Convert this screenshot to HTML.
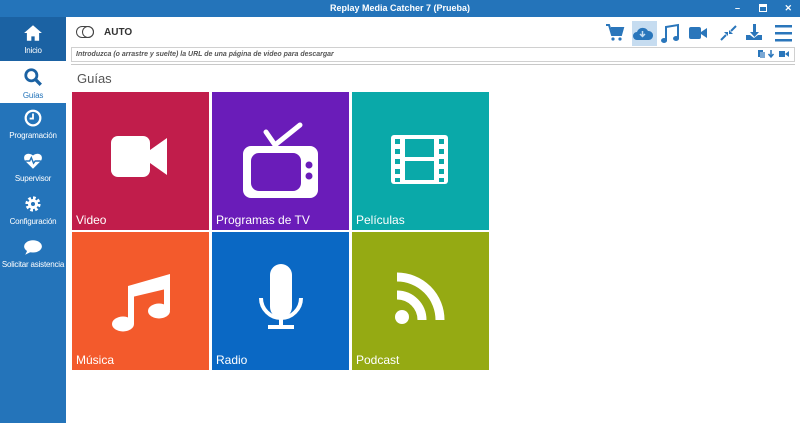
<!DOCTYPE html>
<html><head><meta charset="utf-8"><style>
*{margin:0;padding:0;box-sizing:border-box}
body{width:800px;height:423px;overflow:hidden;background:#fff;font-family:"Liberation Sans",sans-serif;position:relative}
.abs{position:absolute}
#title{left:0;top:0;width:800px;height:17px;background:#2474ba;color:#fff;font-size:9px;font-weight:bold;text-align:center;line-height:17px}
#side{left:0;top:17px;width:66px;height:406px;background:#2474ba}
.si{position:absolute;left:0;width:66px;text-align:center;color:#fff;font-size:8px;white-space:nowrap;letter-spacing:-0.2px}
.si svg{display:block;margin:0 auto 4px}
.tile{position:absolute;width:137px;height:138px;color:#fff;font-size:12px}
.tile span{position:absolute;left:4px;bottom:3px}
.tile svg{position:absolute;left:0;top:0}
</style></head><body>
<div id="title" class="abs">Replay Media Catcher 7 (Prueba)
<span style="position:absolute;right:60px;top:0">–</span>
<span style="position:absolute;right:33px;top:4px;width:8px;height:8px;border:1.5px solid #fff;border-top-width:3px"></span>
<span style="position:absolute;right:8px;top:0">✕</span></div>
<div id="side" class="abs">
 <div class="si" style="top:0;height:44px;background:#1b62a3;padding-top:7px">
  <svg width="20" height="18" viewBox="0 0 18 16"><path d="M9 1L1 8h2.5v7h4v-4h3v4h4V8H17z" fill="#fff"/></svg>Inicio</div>
 <div class="si" style="top:44px;height:42px;background:#fff;color:#2474ba;padding-top:6px">
  <svg width="20" height="20" viewBox="0 0 18 18"><circle cx="7.5" cy="7.5" r="5" fill="none" stroke="#1b62a3" stroke-width="2.5"/><path d="M11 11l5 5" stroke="#1b62a3" stroke-width="3"/></svg>Guías</div>
 <div class="si" style="top:92px">
  <svg width="18" height="18" viewBox="0 0 16 16"><circle cx="8" cy="8" r="6.5" fill="none" stroke="#fff" stroke-width="2"/><path d="M8 4v4.5H5" fill="none" stroke="#fff" stroke-width="1.6"/></svg>Programación</div>
 <div class="si" style="top:135px">
  <svg width="20" height="18" viewBox="0 0 18 16"><path d="M9 15L2 8C-1 4 3-1 9 3c6-4 10 1 7 5z" fill="#fff"/><path d="M2 8h4l1.5-3 2 5 1.5-2H16" fill="none" stroke="#2474ba" stroke-width="1.3"/></svg>Supervisor</div>
 <div class="si" style="top:178px">
  <svg width="18" height="18" viewBox="0 0 16 16"><circle cx="8" cy="8" r="5" fill="none" stroke="#fff" stroke-width="3.5" stroke-dasharray="2.2 1.7"/><circle cx="8" cy="8" r="4.5" fill="#fff"/><circle cx="8" cy="8" r="1.8" fill="#2474ba"/></svg>Configuración</div>
 <div class="si" style="top:222px">
  <svg width="20" height="17" viewBox="0 0 18 15"><ellipse cx="9" cy="6.5" rx="8" ry="5.5" fill="#fff"/><path d="M4 10L2 14l6-3z" fill="#fff"/></svg>Solicitar asistencia</div>
</div>
<div class="abs" style="left:76px;top:26px;width:18px;height:12px;border:1.5px solid #444;border-radius:6px"></div>
<div class="abs" style="left:82px;top:26px;width:12px;height:12px;border:1.5px solid #444;border-radius:6px"></div>
<div class="abs" style="left:104px;top:27px;font-size:10px;font-weight:bold;color:#333">AUTO</div>
<div class="abs" style="left:632px;top:21px;width:25px;height:25px;background:#c6dcf0"></div>
<svg class="abs" style="left:600px;top:21px" width="200" height="25" viewBox="600 21 200 25">
 <g fill="#2a76bb">
 <path d="M606 25h3l3 10h9l2-7h-12" fill="none" stroke="#2a76bb" stroke-width="2"/><path d="M611 28h12l-2 7h-9z"/><circle cx="613" cy="39" r="1.6"/><circle cx="620" cy="39" r="1.6"/>
 <path d="M637 40a4 4 0 0 1 0-8 6 6 0 0 1 11-1 4.5 4.5 0 0 1 1 9z"/>
 <path d="M664 38a3 2.5 0 1 0 .1 0zM676 36a3 2.5 0 1 0 .1 0z"/><path d="M666 40V27l12-2v13" fill="none" stroke="#2a76bb" stroke-width="2"/>
 <rect x="689" y="27" width="12" height="12" rx="2"/><path d="M701 32l6-4v10l-6-4z"/>
 <path d="M721 40l5-5M736 26l-5 5" stroke="#2a76bb" stroke-width="2"/><path d="M724 32h4v4zM733 34h-4v-4z"/>
 <path d="M753 24h3v8h3l-4.5 5-4.5-5h3z"/><path d="M746 35h4l4 3 4-3h4v5h-16z"/>
 <rect x="775" y="25" width="17" height="2.5"/><rect x="775" y="32" width="17" height="2.5"/><rect x="775" y="39" width="17" height="2.5"/>
 </g>
 <path d="M642.5 31v5M640 34l2.5 2.5 2.5-2.5" stroke="#c6dcf0" stroke-width="1.5" fill="none"/>
</svg>
<div class="abs" style="left:71px;top:47px;width:724px;height:15px;border:1px solid #d0d0d0;font-size:7px;font-style:italic;font-weight:bold;color:#555;padding:3px 0 0 4px">Introduzca (o arrastre y suelte) la URL de una página de video para descargar</div>
<svg class="abs" style="left:757px;top:49px" width="34" height="10"><g fill="#2a76bb"><rect x="1" y="1" width="5" height="7"/><rect x="3" y="3" width="5" height="6" fill="#7aa8d4"/><path d="M14 1v6M11.5 5l2.5 3 2.5-3" stroke="#2a76bb" stroke-width="1.5" fill="none"/><rect x="22" y="2" width="6" height="6"/><path d="M28 5l4-3v6z"/></g></svg>
<div class="abs" style="left:71px;top:64px;width:724px;height:1px;background:#c8c8c8"></div>
<div class="abs" style="left:77px;top:71px;font-size:13px;color:#555">Guías</div>
<div class="tile" style="left:72px;top:92px;background:#c11d4b"><svg width="137" height="138"><rect x="39" y="44" width="39" height="41" rx="7" fill="#fff"/><path d="M78 58l17-12v37l-17-12z" fill="#fff"/></svg><span>Video</span></div>
<div class="tile" style="left:212px;top:92px;background:#6a1cb9"><svg width="137" height="138"><path d="M63 53L54 40M63 53L88 33" stroke="#fff" stroke-width="5" stroke-linecap="round"/><rect x="31" y="54" width="75" height="52" rx="8" fill="#fff"/><rect x="39" y="61" width="50" height="38" rx="8" fill="#6a1cb9"/><circle cx="97" cy="73" r="3.5" fill="#6a1cb9"/><circle cx="97" cy="84" r="3.5" fill="#6a1cb9"/></svg><span>Programas de TV</span></div>
<div class="tile" style="left:352px;top:92px;background:#0aa9a9"><svg width="137" height="138"><rect x="39" y="43" width="57" height="49" rx="3" fill="#fff"/><g fill="#0aa9a9"><rect x="43" y="47" width="5" height="5"/><rect x="43" y="57" width="5" height="5"/><rect x="43" y="67" width="5" height="5"/><rect x="43" y="77" width="5" height="5"/><rect x="43" y="86" width="5" height="4"/><rect x="87" y="47" width="5" height="5"/><rect x="87" y="57" width="5" height="5"/><rect x="87" y="67" width="5" height="5"/><rect x="87" y="77" width="5" height="5"/><rect x="87" y="86" width="5" height="4"/><rect x="53" y="47" width="29" height="18"/><rect x="53" y="69" width="29" height="19"/></g></svg><span>Películas</span></div>
<div class="tile" style="left:72px;top:232px;background:#f35a2c"><svg width="137" height="138"><path d="M56 54l42-12v14l-42 10z" fill="#fff"/><path d="M59 58v34M95 46v32" stroke="#fff" stroke-width="6"/><ellipse cx="51" cy="92" rx="11" ry="7.5" fill="#fff"/><ellipse cx="87" cy="79" rx="11" ry="7.5" fill="#fff"/></svg><span>Música</span></div>
<div class="tile" style="left:212px;top:232px;background:#0a68c4"><svg width="137" height="138"><rect x="58" y="32" width="22" height="54" rx="11" fill="#fff"/><path d="M49 66a20 20 0 0 0 40 0" fill="none" stroke="#fff" stroke-width="4"/><path d="M69 86v9M56 95h26" stroke="#fff" stroke-width="4"/></svg><span>Radio</span></div>
<div class="tile" style="left:352px;top:232px;background:#95aa13"><svg width="137" height="138"><circle cx="50" cy="85" r="7" fill="#fff"/><path d="M45 63a25 25 0 0 1 25 25" fill="none" stroke="#fff" stroke-width="9"/><path d="M45 45a43 43 0 0 1 43 43" fill="none" stroke="#fff" stroke-width="9"/></svg><span>Podcast</span></div>
</body></html>
